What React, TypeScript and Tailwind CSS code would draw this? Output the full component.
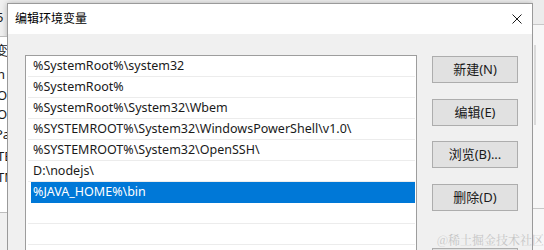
import React from "react";

const rows = [
  "%SystemRoot%\\system32",
  "%SystemRoot%",
  "%SystemRoot%\\System32\\Wbem",
  "%SYSTEMROOT%\\System32\\WindowsPowerShell\\v1.0\\",
  "%SYSTEMROOT%\\System32\\OpenSSH\\",
  "D:\\nodejs\\",
  "%JAVA_HOME%\\bin",
  "",
  "",
  "",
];

const font = { fontFamily: '"Noto Sans", "Noto Sans CJK SC", sans-serif' };

function Btn({ label, className }: { label: string; className?: string }) {
  return (
    <div
      className={
        "h-[27px] w-[86px] shrink-0 flex items-center justify-center bg-[#e1e1e1] border border-[#adadad] text-[13px] text-[#1a1a1a] " +
        (className ?? "")
      }
    >
      {label}
    </div>
  );
}

export default function App() {
  return (
    <div
      className="relative w-[544px] h-[250px] overflow-hidden flex bg-[#f0f0f0]"
      style={font}
    >
      {/* parent window left strip */}
      <div className="w-[7px] shrink-0 flex flex-col bg-[#f0f0f0] overflow-hidden text-[13px] text-[#1a1a1a]">
        <div className="h-[37px] shrink-0 border-b border-[#bdbdbd] relative">
          <span className="absolute left-[-4px] top-[8px]">5</span>
        </div>
        <div className="relative flex-1 bg-[#ffffff]">
          <span className="absolute left-[-5px] top-[4px]">变</span>
          <span className="absolute left-[-3px] top-[28px]">n</span>
          <span className="absolute left-[-3px] top-[49px]">O</span>
          <span className="absolute left-[-3px] top-[68px]">O</span>
          <span className="absolute left-[-5px] top-[88px]">Pa</span>
          <span className="absolute left-[-3px] top-[110px]">TE</span>
          <span className="absolute left-[-3px] top-[131px]">TM</span>
          <div className="absolute left-0 right-0 top-[175px] border-t border-[#bdbdbd]" />
          <div className="absolute left-0 right-0 top-[176px] bottom-0 bg-[#f0f0f0]" />
        </div>
      </div>

      {/* dialog */}
      <div className="w-[526px] shrink-0 mt-[3px] flex flex-col border-l border-r border-t border-[#9a9a9a] bg-[#f0f0f0] shadow-[0_0_6px_rgba(0,0,0,0.25)]">
        <div className="h-[30px] shrink-0 bg-white flex items-center justify-between pl-[7px] pr-[10px]">
          <span className="text-[12px] text-[#000]">编辑环境变量</span>
          <svg width="10" height="10" viewBox="0 0 10 10">
            <path d="M0.5 0.5 L9.5 9.5 M9.5 0.5 L0.5 9.5" stroke="#1a1a1a" strokeWidth="1" />
          </svg>
        </div>
        <div className="flex shrink-0 pl-[17px] pt-[21px] pr-[14px]">
          <div className="w-[392px] h-[220px] bg-white border border-[#9d9d9d] pl-[2px] pr-[1px] shrink-0">
            {rows.map((r, i) => (
              <div
                key={i}
                className={
                  "h-[21px] flex items-stretch text-[12.5px] " +
                  (i === 6 ? "" : "border-b border-[#ececec]")
                }
              >
                <div
                  className={
                    "flex-1 flex items-center pl-[2px] ml-[3px] whitespace-nowrap " +
                    (i === 6 ? "bg-[#0078d7] text-white" : "text-[#1a1a1a]")
                  }
                >
                  {r}
                </div>
              </div>
            ))}
          </div>
          <div className="ml-[15px] mt-[1px] flex flex-col">
            <Btn label="新建(N)" />
            <Btn label="编辑(E)" className="mt-[16px]" />
            <Btn label="浏览(B)..." className="mt-[15px]" />
            <Btn label="删除(D)" className="mt-[16px]" />
            <Btn label="上移(U)" className="mt-[37px]" />
          </div>
        </div>
      </div>

      {/* right strip */}
      <div className="flex-1 flex flex-col">
        <div className="h-[25px] shrink-0 bg-[#ececec] border-b border-[#c8c8c8]" />
        <div className="flex-1 relative bg-[#f7f7f7]">
          <div className="absolute left-[1px] top-[20px] h-[80px] w-[2px] bg-[#dadada]" />
          <div className="absolute left-0 right-0 top-[183px] border-t border-[#c8c8c8]" />
        </div>
      </div>

      <div
        className="absolute left-[437px] top-[231px] text-[12px] leading-[18px] text-[#c6c6c6] whitespace-nowrap"
        style={{ fontFamily: '"Noto Serif CJK SC", "Noto Sans CJK SC", serif' }}
      >
        @稀土掘金技术社区
      </div>
    </div>
  );
}
